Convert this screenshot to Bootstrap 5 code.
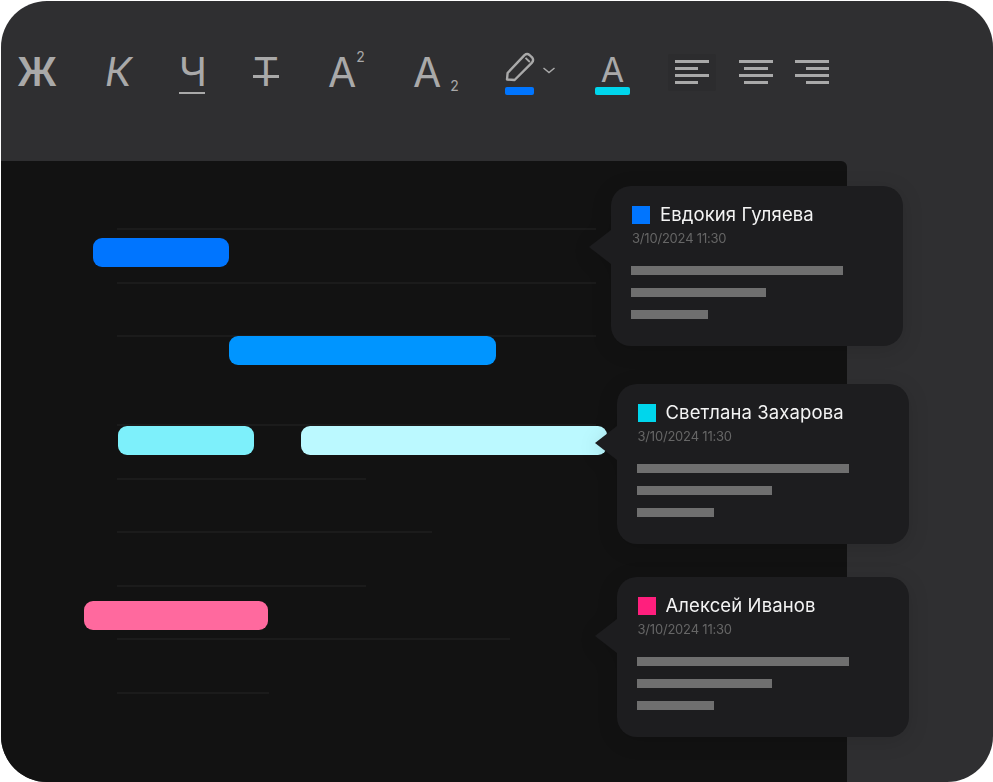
<!DOCTYPE html>
<html lang="ru">
<head>
    <meta charset="UTF-8">
    <meta name="viewport" content="width=device-width, initial-scale=1.0">
    <title>Редактор комментариев</title>
    <link href="https://cdn.jsdelivr.net/npm/bootstrap@5.3.0/dist/css/bootstrap.min.css" rel="stylesheet">
    <style>
        body {
            background: #fff;
            padding: 1px 0 0 1px;
            font-family: "Inter", "Noto Sans", sans-serif;
        }
        .app-window {
            width: 992px;
            height: 781px;
            background: #2f2f31;
            border-radius: 46px;
            overflow: hidden;
        }
        .toolbar {
            height: 160px;
            padding: 49px 0 0 16px;
        }
        .tool {
            height: 46px;
            color: #a9a9a9;
            line-height: 44px;
            font-size: 41px;
            font-weight: 400;
            text-align: center;
            white-space: nowrap;
            flex: none;
        }
        .tool-bold { width: 38px; margin-right: 52px; font-size: 39px; font-weight: 600; }
        .tool-italic { width: 24px; margin: 0 50px 0 -2px; font-size: 40px; font-style: italic; }
        .tool-under { width: 26px; margin-right: 48px; position: relative; font-size: 40px; }
        .tool-under::after {
            content: "";
            position: absolute;
            left: 0;
            right: 0;
            top: 42px;
            height: 2px;
            background: #a9a9a9;
        }
        .tool-strike { width: 26px; margin-right: 49px; position: relative; font-size: 40px; }
        .tool-strike::after {
            content: "";
            position: absolute;
            left: 0;
            right: 0;
            top: 25px;
            height: 2.5px;
            background: #a9a9a9;
        }
        .tool-sup { width: 36px; margin-right: 49px; text-align: left; }
        .tool-sub { width: 47px; margin-right: 45px; text-align: left; }
        .tool-sup sup, .tool-sub sub { font-size: 14px; position: relative; vertical-align: baseline; line-height: 0; }
        .tool-sup sup { top: -25px; left: 0; }
        .tool-sub sub { top: 4px; left: 9px; }
        .tool-pen { width: 51px; margin-right: 39px; position: relative; }
        .tool-color { width: 35px; margin-right: 38px; font-size: 34px; line-height: 40px; position: relative; }
        .swatch-line {
            position: absolute;
            left: 0;
            top: 37px;
            height: 8px;
            border-radius: 2px;
        }
        .tool-pen .swatch-line { width: 29px; background: #0075ff; }
        .tool-color .swatch-line { width: 35px; background: #00d6ec; }
        .tool-align {
            width: 48px;
            height: 37px;
            margin-top: 4px;
            padding: 6px 7px 0;
        }
        .tool-align.is-active { background: #2c2c2e; margin-right: 16px; border-radius: 2px; }
        .tool-align.is-mid { margin-right: 8px; }
        .tool-align span { display: block; height: 3px; margin-bottom: 4px; background: #a9a9a9; width: 100%; }
        .tool-align span:nth-child(even) { width: 68%; }
        .is-mid span:nth-child(even) { margin-left: 16%; }
        .is-end span:nth-child(even) { margin-left: 32%; }

        .doc-canvas {
            width: 846px;
            height: 621px;
            background: #121212;
            border-top-right-radius: 6px;
            padding: 67px 0 0 116px;
            position: relative;
        }
        .rule { height: 2px; background: #1b1b1b; }
        .rule-group { row-gap: 51.6px; }
        .rule-group.is-first { row-gap: 51.5px; }
        .rule-group + .rule-group { margin-top: 87px; }
        .w-479 { width: 479px; }
        .w-249 { width: 249px; }
        .w-315 { width: 315px; }
        .w-393 { width: 393px; }
        .w-152 { width: 152px; }

        .mark-bar { position: absolute; height: 29px; border-radius: 9px; }
        .bar-a { left: 92px; top: 77px; width: 136px; background: #0075ff; }
        .bar-b { left: 228px; top: 175px; width: 267px; background: #0095ff; }
        .bar-c { left: 117px; top: 265px; width: 136px; background: #7df0fb; }
        .bar-d { left: 300px; top: 265px; width: 306px; background: #bbf9ff; }
        .bar-e { left: 83px; top: 440px; width: 184px; background: #ff699e; }

        .note-card {
            position: absolute;
            width: 292px;
            height: 160px;
            padding: 20px 21px 0;
            background: #1d1d1f;
            border-radius: 20px;
            filter: drop-shadow(0 4px 10px rgba(0, 0, 0, .12));
        }
        .note-card::before {
            content: "";
            position: absolute;
            left: -22px;
            top: 44px;
            border-style: solid;
            border-width: 17px 22px 17px 0;
            border-color: transparent #1d1d1f transparent transparent;
        }
        .note-one { left: 610px; top: 25px; }
        .note-two { left: 615.5px; top: 223px; }
        .note-three { left: 615.5px; top: 416px; }
        .note-two::before { top: 42px; }
        .note-three::before { top: 42px; }
        .note-head { column-gap: 10px; height: 18px; }
        .note-square { width: 18px; height: 18px; flex: none; }
        .note-name { color: #f4f4f4; font-size: 18.5px; line-height: 18px; letter-spacing: .1px; padding-bottom: 2px; }
        .note-date { color: #666; font-size: 13px; line-height: 16px; margin-top: 6px; letter-spacing: -.2px; }
        .note-lines { margin-top: 20px; row-gap: 13.5px; margin-left: -1px; }
        .note-lines div { height: 8.5px; background: #6f6f6f; }
        .len-long { width: 212px; }
        .len-mid { width: 135px; }
        .len-short { width: 77px; }
    </style>
</head>
<body>
    <div class="app-window">
        <div class="toolbar d-flex align-items-start">
            <div class="tool tool-bold">Ж</div>
            <div class="tool tool-italic">К</div>
            <div class="tool tool-under">Ч</div>
            <div class="tool tool-strike">Т</div>
            <div class="tool tool-sup">А<sup>2</sup></div>
            <div class="tool tool-sub">А<sub>2</sub></div>
            <div class="tool tool-pen">
                <svg class="d-block" width="51" height="36" viewBox="0 0 51 36" fill="none" stroke="#a9a9a9">
                    <path d="M2 29.5 2.6 23 19.5 5.2Q22 3 24.5 5L27.3 7.7Q29 10 27 12.6L9.6 30Z" stroke-width="2.4" stroke-linejoin="round"/>
                    <path d="M20.5 7.8 24.8 12" stroke-width="1.8"/>
                    <path d="M38.5 18 44 22.5 49.5 18" stroke-width="1.5"/>
                </svg>
                <div class="swatch-line"></div>
            </div>
            <div class="tool tool-color">А<div class="swatch-line"></div></div>
            <div class="tool tool-align is-active"><span></span><span></span><span></span><span></span></div>
            <div class="tool tool-align is-mid"><span></span><span></span><span></span><span></span></div>
            <div class="tool tool-align is-end"><span></span><span></span><span></span><span></span></div>
        </div>

        <div class="doc-canvas">
            <div class="rule-group is-first d-flex flex-column">
                <div class="rule w-479"></div>
                <div class="rule w-479"></div>
                <div class="rule w-479"></div>
            </div>
            <div class="rule-group d-flex flex-column">
                <div class="rule w-479"></div>
                <div class="rule w-249"></div>
                <div class="rule w-315"></div>
                <div class="rule w-249"></div>
                <div class="rule w-393"></div>
                <div class="rule w-152"></div>
            </div>

            <div class="mark-bar bar-a"></div>
            <div class="mark-bar bar-b"></div>
            <div class="mark-bar bar-c"></div>
            <div class="mark-bar bar-d"></div>
            <div class="mark-bar bar-e"></div>

            <div class="note-card note-one">
                <div class="note-head d-flex align-items-center">
                    <div class="note-square" style="background:#0075ff"></div>
                    <div class="note-name">Евдокия Гуляева</div>
                </div>
                <div class="note-date">3/10/2024 11:30</div>
                <div class="note-lines d-flex flex-column">
                    <div class="len-long"></div>
                    <div class="len-mid"></div>
                    <div class="len-short"></div>
                </div>
            </div>

            <div class="note-card note-two">
                <div class="note-head d-flex align-items-center">
                    <div class="note-square" style="background:#00d6ec"></div>
                    <div class="note-name">Светлана Захарова</div>
                </div>
                <div class="note-date">3/10/2024 11:30</div>
                <div class="note-lines d-flex flex-column">
                    <div class="len-long"></div>
                    <div class="len-mid"></div>
                    <div class="len-short"></div>
                </div>
            </div>

            <div class="note-card note-three">
                <div class="note-head d-flex align-items-center">
                    <div class="note-square" style="background:#ff1f7d"></div>
                    <div class="note-name">Алексей Иванов</div>
                </div>
                <div class="note-date">3/10/2024 11:30</div>
                <div class="note-lines d-flex flex-column">
                    <div class="len-long"></div>
                    <div class="len-mid"></div>
                    <div class="len-short"></div>
                </div>
            </div>
        </div>
    </div>

    <script src="https://cdn.jsdelivr.net/npm/bootstrap@5.3.0/dist/js/bootstrap.bundle.min.js"></script>
</body>
</html>
